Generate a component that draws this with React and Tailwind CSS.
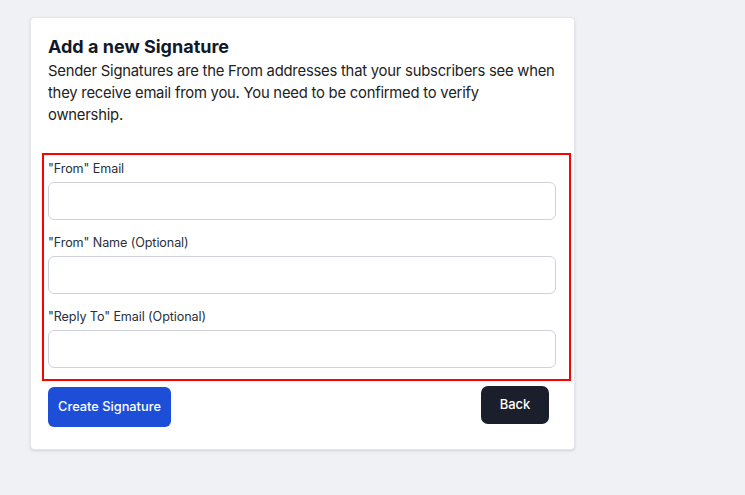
import React from 'react';

const Field = ({ label, first }) => (
  <div className={first ? '' : 'mt-[15px]'}>
    <label className="block text-[12.6px] leading-[16px] text-[#2a2f3a] tracking-[-0.1px]">{label}</label>
    <input
      type="text"
      className="mt-[5px] block w-[508px] h-[38px] rounded-[6px] border border-[#cfd2da] bg-white px-3 text-[14px] outline-none"
    />
  </div>
);

export default function App() {
  return (
    <div
      className="min-h-[495px] w-full bg-[#f0f1f5] pt-[17px] pl-[30px]"
      style={{ fontFamily: 'Inter, "Noto Sans", sans-serif' }}
    >
      <div className="w-[545px] rounded-[4px] border border-[#e4e6eb] bg-white pt-[17px] pb-[22px] pl-[11px] shadow-sm">
        <div className="pl-[6px]">
          <h2 className="text-[18px] font-bold leading-[24px] text-[#111827]">Add a new Signature</h2>
          <p className="mt-[1px] w-[518px] text-[14.8px] leading-[22px] text-[#222] tracking-[-0.22px]">
            Sender Signatures are the From addresses that your subscribers see when they receive email from you. You need to be confirmed to verify
            <br />
            ownership.
          </p>
        </div>

        <div className="mt-[27px] w-[529px] border-2 border-[#ff0000] pt-[6px] pb-[11px] pl-[4px]">
          <Field label={'"From" Email'} first />
          <Field label={'"From" Name (Optional)'} />
          <Field label={'"Reply To" Email (Optional)'} />
        </div>

        <div className="mt-[6px] flex w-[507px] items-start justify-between pl-[6px]">
          <button className="h-[40px] w-[123px] rounded-[6px] bg-[#1d4ed8] text-[12.8px] font-medium text-white">
            Create Signature
          </button>
          <button className="-mt-[1px] h-[38px] w-[68px] rounded-[7px] bg-[#1a1f2b] text-[13px] font-medium text-white">
            Back
          </button>
        </div>
      </div>
    </div>
  );
}
